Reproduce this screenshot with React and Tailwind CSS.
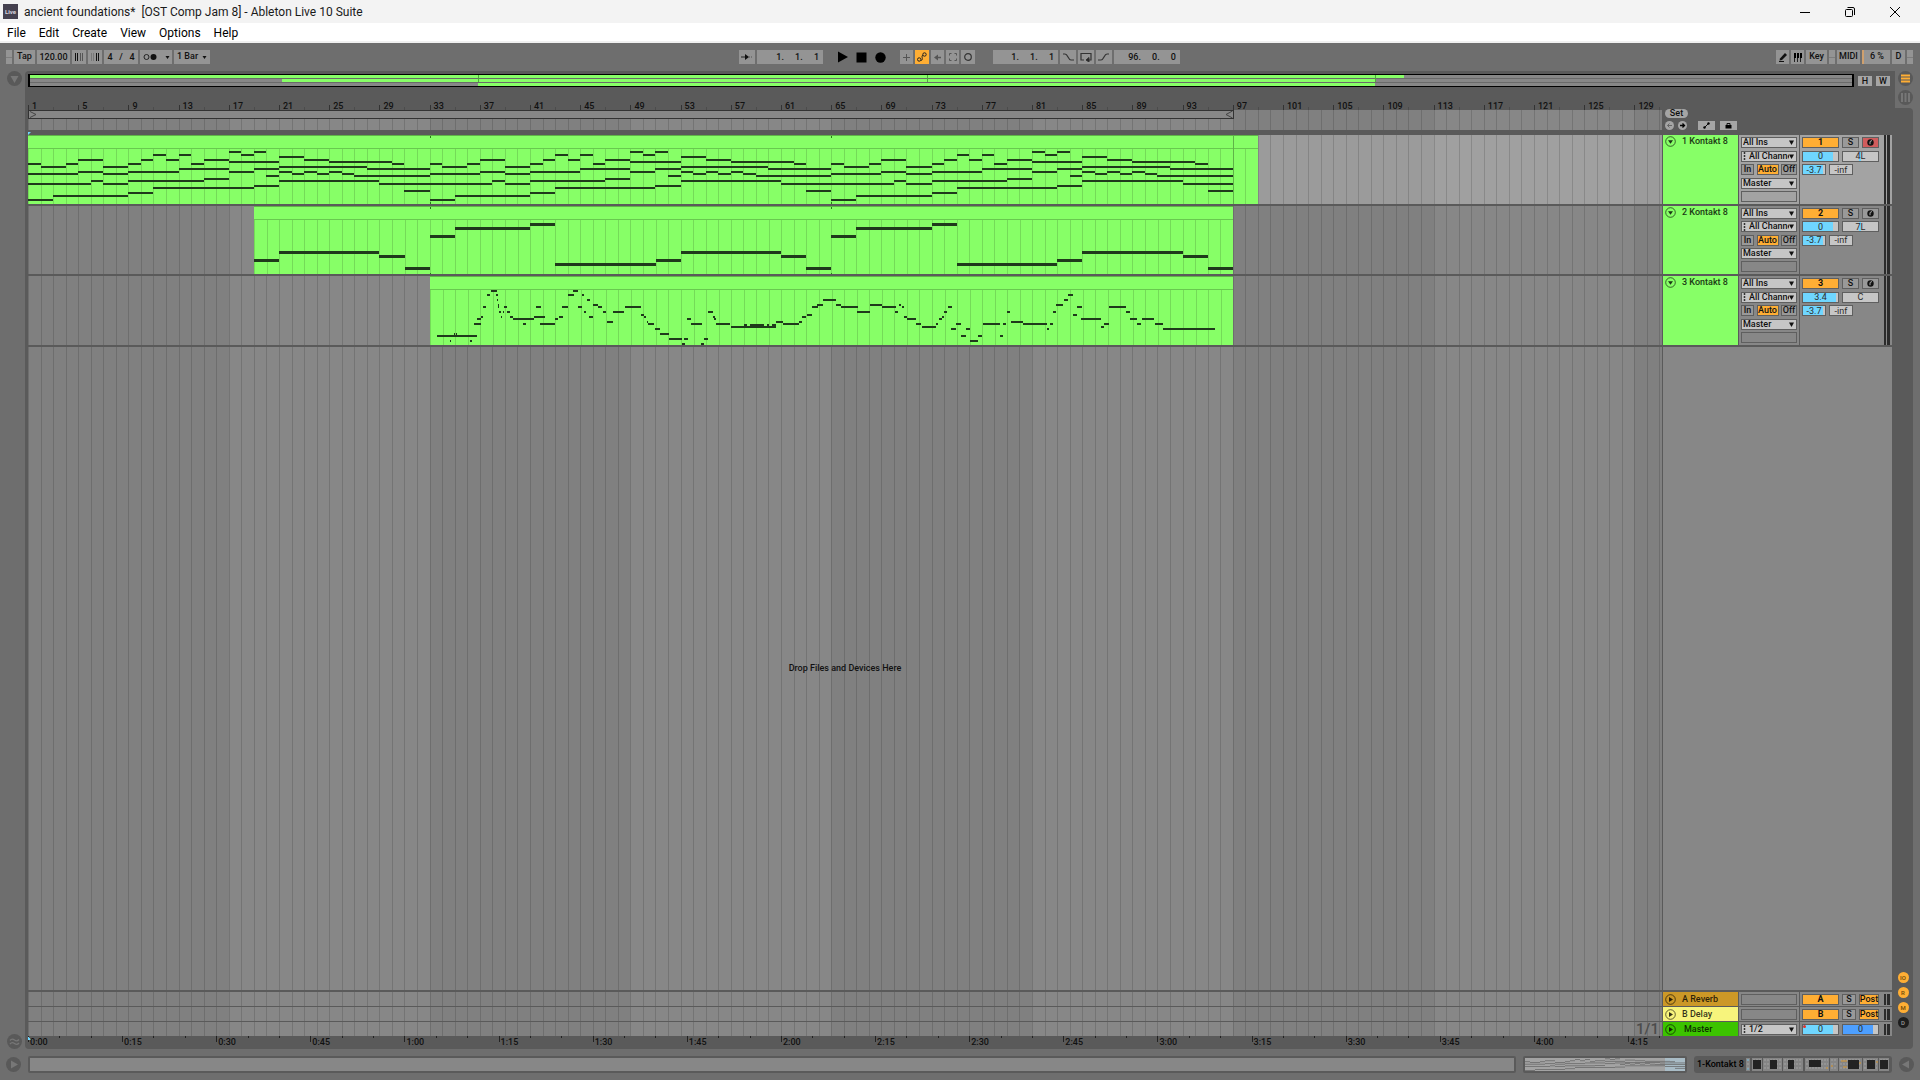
import React, { useState } from 'react';
import clsx from 'clsx';

const TOTAL_BARS = 130.2;
const pct = (bars, total = TOTAL_BARS) => `${(bars / total) * 100}%`;
const range = (n) => Array.from({ length: n }, (_, i) => i);

// [row y, start bar, end bar, ...more start/end pairs]
const CHORD_ROWS = [
    [16, 16, 17, 18, 19],
    [19, 10, 11, 12, 13, 17, 18],
    [21, 20, 22],
    [24, 4, 6, 9, 10, 11, 12, 14, 16, 22, 24],
    [26, 16, 20, 24, 29],
    [28, 0, 1, 3, 4, 8, 9, 13, 14, 29, 30],
    [31, 1, 3, 6, 8, 20, 27],
    [33, 12, 16, 18, 20, 27, 32],
    [36, 4, 6, 8, 12, 16, 18, 20, 21, 22, 23, 24, 25],
    [38, 0, 4, 6, 8, 21, 22, 23, 24, 25, 26],
    [40, 19, 20, 26, 32],
    [43, 14, 16],
    [45, 5, 6, 8, 14, 20, 28],
    [48, 0, 5, 6, 8, 28, 32],
    [50, 18, 20],
    [52, 10, 18],
    [55, 30, 32],
    [57, 8, 10],
    [60, 2, 8],
    [64, 0, 2],
];

const BASS_ROWS = [
    [17, 8, 10],
    [21, 2, 8],
    [29, 0, 2],
    [45, 20, 28],
    [49, 28, 30],
    [53, 18, 20],
    [57, 10, 18],
    [61, 30, 32],
];

// Melody is free-timed: 2409 steps over 64 bars, [start, end, pitch line]
const MELODY_STEPS = 2409;
const MELODY = [
    [22, 140, 648], [60, 63, 663], [120, 125, 663], [72, 75, 642], [78, 81, 642], [132, 152, 612],
    [142, 152, 598], [152, 158, 591], [160, 169, 562], [170, 181, 526], [183, 201, 512], [199, 203, 526],
    [201, 204, 541], [203, 206, 555], [204, 207, 562], [208, 212, 576], [213, 217, 591], [218, 222, 576],
    [222, 231, 562], [230, 239, 576], [240, 249, 591], [250, 312, 598], [280, 288, 612], [312, 344, 591],
    [319, 332, 562], [329, 375, 612], [375, 384, 598], [387, 399, 591], [397, 414, 562], [415, 431, 526],
    [430, 445, 512], [444, 455, 562], [456, 461, 526], [462, 468, 576], [470, 479, 541], [478, 489, 591],
    [490, 503, 555], [504, 517, 562], [518, 528, 576], [531, 548, 605], [550, 582, 576], [586, 634, 562],
    [634, 643, 584], [643, 648, 591], [651, 654, 605], [655, 671, 612], [674, 689, 627], [689, 716, 642],
    [718, 755, 656], [756, 765, 671], [763, 774, 656], [814, 822, 671], [823, 834, 656], [772, 783, 598],
    [782, 815, 612], [835, 848, 576], [849, 854, 591], [852, 858, 598], [859, 900, 612], [903, 1038, 620],
    [941, 951, 615], [960, 1002, 615], [1010, 1018, 615], [1025, 1038, 615], [1039, 1059, 605], [1060, 1107, 612],
    [1107, 1115, 605], [1116, 1128, 591], [1130, 1146, 584], [1147, 1163, 562], [1161, 1179, 555], [1178, 1218, 541],
    [1217, 1232, 555], [1234, 1283, 562], [1281, 1320, 576], [1320, 1356, 555], [1356, 1398, 562], [1396, 1405, 576],
    [1406, 1413, 555], [1416, 1422, 562], [1423, 1431, 591], [1431, 1458, 598], [1459, 1474, 612], [1476, 1518, 620],
    [1517, 1525, 612], [1527, 1535, 598], [1536, 1542, 591], [1543, 1551, 576], [1554, 1566, 562], [1564, 1578, 627],
    [1579, 1592, 612], [1593, 1607, 648], [1608, 1620, 627], [1621, 1643, 663], [1644, 1656, 648], [1658, 1710, 612],
    [1711, 1719, 648], [1718, 1728, 612], [1731, 1741, 576], [1743, 1779, 605], [1779, 1851, 612], [1851, 1858, 627],
    [1860, 1868, 612], [1870, 1878, 576], [1879, 1899, 555], [1901, 1914, 541], [1915, 1929, 526], [1930, 1940, 584],
    [1942, 1955, 562], [1954, 2013, 598], [2014, 2022, 620], [2022, 2036, 612], [2038, 2088, 562], [2089, 2100, 576],
    [2100, 2120, 598], [2121, 2133, 612], [2136, 2172, 598], [2173, 2199, 612], [2199, 2355, 627],
];

function loopNotes(rows, clipStart, h) {
    const notes = [];
    [0, 32, 64].forEach((base) => {
        rows.forEach(([y, ...spans]) => {
            for (let i = 0; i < spans.length; i += 2) {
                const x = base + spans[i] - clipStart;
                if (x >= 0) notes.push({ x, w: spans[i + 1] - spans[i], y, h });
            }
        });
    });
    return notes;
}

const melodyNotes = MELODY.map(([a, b, line]) => ({
    x: (a / MELODY_STEPS) * 64,
    w: ((b - a) / MELODY_STEPS) * 64,
    y: Math.round(line / 3 - 157),
    h: 2,
}));

const TRACKS = [
    { id: 1, name: '1 Kontakt 8', start: 0, end: 98, loops: [32, 64], boundary: 96, notes: loopNotes(CHORD_ROWS, 0, 2), height: 'h-[69px]', vol: '0', volFill: 'w-[85%]', pan: '4L', panMark: true, armed: true, selected: true },
    { id: 2, name: '2 Kontakt 8', start: 18, end: 96, loops: [14, 46], notes: loopNotes(BASS_ROWS, 18, 3), height: 'h-[68px]', vol: '0', volFill: 'w-[85%]', pan: '7L', panMark: true },
    { id: 3, name: '3 Kontakt 8', start: 32, end: 96, loops: [], notes: melodyNotes, height: 'h-[69px]', vol: '3.4', volFill: 'w-[94%]', pan: 'C' },
];

const MENUS = ['File', 'Edit', 'Create', 'View', 'Options', 'Help'];

/* ---------- Title bar + menu ---------- */

function TitleBar() {
    return (
        <header className="flex h-[23px] items-center justify-between bg-[#f3f3f3] pl-[3px] text-[12px] text-[#1a1a1a]">
            <div className="flex items-center gap-[6px]">
                <span className="flex h-[15px] w-[15px] items-center justify-center bg-[#45414f] text-[6px] font-bold text-[#d5d2dc]">Live</span>
                <h1 className="whitespace-pre">ancient foundations*  [OST Comp Jam 8] - Ableton Live 10 Suite</h1>
            </div>
            <div className="flex pr-[3px]">
                <WindowButton label="Minimize"><path d="M1 6.5H11" /></WindowButton>
                <WindowButton label="Restore">
                    <rect x="1.5" y="3.5" width="7" height="7" rx="1" />
                    <path d="M3.5 1.5H9a1.5 1.5 0 0 1 1.5 1.5V9" />
                </WindowButton>
                <WindowButton label="Close"><path d="M1 1L11 11M11 1L1 11" /></WindowButton>
            </div>
        </header>
    );
}

function WindowButton({ label, children }) {
    return (
        <button aria-label={label} className="flex h-[22px] w-[45px] items-center justify-center">
            <svg viewBox="0 0 12 12" className="h-3 w-3 fill-none stroke-black">{children}</svg>
        </button>
    );
}

function MenuBar() {
    return (
        <nav className="flex h-5 items-start gap-[13px] border-b-2 border-[#f0f0f0] bg-white pl-[7px] text-[12px] leading-[20px] text-black">
            {MENUS.map((m) => <button key={m}>{m}</button>)}
        </nav>
    );
}

/* ---------- Control bar ---------- */

function Ctl({ className, label, children }) {
    return (
        <button aria-label={label} className={clsx('flex h-[14px] items-center justify-center', className)}>
            {children}
        </button>
    );
}

const grey = 'bg-[#949494]';

function Grip() {
    return (
        <span className="flex h-[14px] w-[6px] items-center bg-[#949494]">
            <span className="h-px w-full bg-[#7d7d7d]" />
        </span>
    );
}

function Position({ label, value, className }) {
    return (
        <input
            aria-label={label}
            defaultValue={value}
            className={clsx('h-[14px] bg-[#949494] pr-1 text-right whitespace-pre', className)}
        />
    );
}

function ControlBar() {
    const [playing, setPlaying] = useState(false);
    return (
        <section className="grid h-7 grid-cols-[1fr_auto_1fr] items-center pr-[7px] pl-[6px]">
            <div className="flex gap-[2px]">
                <Grip />
                <Ctl className={`${grey} w-[21px]`}>Tap</Ctl>
                <input aria-label="Tempo" defaultValue="120.00" className="h-[14px] w-[33px] bg-[#949494] text-center" />
                <Ctl className={`${grey} w-[14px]`} label="Nudge down">
                    <svg viewBox="0 0 10 8" className="h-2 w-[10px]" shapeRendering="crispEdges"><path d="M1.5 0V8M3.5 0V8" stroke="#111" /><path d="M6.5 0V8M8.5 0V8" stroke="#555" /></svg>
                </Ctl>
                <Ctl className={`${grey} w-[14px]`} label="Nudge up">
                    <svg viewBox="0 0 10 8" className="h-2 w-[10px]" shapeRendering="crispEdges"><path d="M1.5 0V8M3.5 0V8" stroke="#777" /><path d="M6.5 0V8M8.5 0V8" stroke="#111" /></svg>
                </Ctl>
                <input aria-label="Time signature" defaultValue="4   /   4" className="h-[14px] w-[34px] bg-[#949494] text-center" />
                <Ctl className={`${grey} w-8 gap-2`} label="Metronome">
                    <svg viewBox="0 0 14 8" className="h-2 w-[14px]"><circle cx="3.5" cy="4" r="2.5" fill="none" stroke="#222" /><circle cx="10.5" cy="4" r="3" fill="#111" /></svg>
                    <Caret />
                </Ctl>
                <span className="relative flex h-[14px] w-9 items-center bg-[#949494]">
                    <select aria-label="Quantization" className="h-full w-full appearance-none pl-[3px]"><option>1 Bar</option></select>
                    <span className="pointer-events-none absolute right-[3px]"><Caret /></span>
                </span>
            </div>

            <div className="flex items-center gap-[2px]">
                <Ctl className={`${grey} w-4`} label="Follow">
                    <svg viewBox="0 0 12 8" className="h-2 w-3"><path d="M0 4H4" stroke="#222" /><path d="M4 1L8 4L4 7Z" fill="#111" /><path d="M8 4H12" stroke="#555" strokeDasharray="1 1" /></svg>
                </Ctl>
                <Position label="Arrangement position" value="1.     1.     1" className="w-[66px]" />
                <div className="flex items-center gap-2 px-3">
                    <button aria-label="Play" onClick={() => setPlaying(true)} aria-pressed={playing}>
                        <svg viewBox="0 0 11 12" className="h-3 w-[11px]"><path d="M1 0.5L11 6L1 11.5Z" /></svg>
                    </button>
                    <button aria-label="Stop" onClick={() => setPlaying(false)}>
                        <svg viewBox="0 0 11 11" className="h-[11px] w-[11px]"><path d="M0.5 0.5H10.5V10.5H0.5Z" /></svg>
                    </button>
                    <button aria-label="Record">
                        <svg viewBox="0 0 11 11" className="h-[11px] w-[11px]"><circle cx="5.5" cy="5.5" r="5.2" /></svg>
                    </button>
                </div>
                <Ctl className={`${grey} w-[13px]`} label="Overdub">
                    <svg viewBox="0 0 9 9" className="h-[9px] w-[9px] stroke-[#555]"><path d="M4.5 1V8M1 4.5H8" /></svg>
                </Ctl>
                <Ctl className="w-[14px] bg-[#ffae34]" label="Automation arm">
                    <svg viewBox="0 0 10 10" className="h-[10px] w-[10px] fill-none stroke-[#222]"><circle cx="2.2" cy="7.5" r="1.7" /><circle cx="7.5" cy="2.5" r="1.7" /><path d="M4 8.5C7 8 3.5 3 6 3.5" /></svg>
                </Ctl>
                <Ctl className={`${grey} w-[13px]`} label="Re-enable automation">
                    <svg viewBox="0 0 9 9" className="h-[9px] w-[9px]"><path d="M1 4.5L5 1.5V7.5Z" fill="#555" /><path d="M4 4.5H8" stroke="#555" strokeWidth="1.5" /></svg>
                </Ctl>
                <Ctl className={`${grey} w-[13px]`} label="Capture MIDI">
                    <svg viewBox="0 0 10 10" className="h-[10px] w-[10px] fill-none stroke-[#555]"><path d="M1.5 3.5V1.5H3.5M6.5 1.5H8.5V3.5M8.5 6.5V8.5H6.5M3.5 8.5H1.5V6.5" /></svg>
                </Ctl>
                <Ctl className={`${grey} w-[14px]`} label="Session record">
                    <svg viewBox="0 0 10 10" className="h-[10px] w-[10px] fill-none stroke-[#333]"><circle cx="5" cy="5" r="3.3" strokeWidth="1.2" /></svg>
                </Ctl>
                <div className="w-[14px]" />
                <Position label="Loop start" value="1.     1.     1" className="w-[65px]" />
                <Ctl className={`${grey} w-4`} label="Punch in">
                    <svg viewBox="0 0 12 10" className="h-[10px] w-3 fill-none stroke-[#333]"><path d="M1 2H3C6 2 6 8 9 8H12" strokeWidth="1.2" /></svg>
                </Ctl>
                <Ctl className={`${grey} w-4`} label="Loop">
                    <svg viewBox="0 0 12 10" className="h-[10px] w-3 fill-none stroke-[#333]"><path d="M4 8H1V1.5H11V8H8" strokeWidth="1.2" /><path d="M9 5.5L6 8L9 10Z" fill="#222" /></svg>
                </Ctl>
                <Ctl className={`${grey} w-4`} label="Punch out">
                    <svg viewBox="0 0 12 10" className="h-[10px] w-3 fill-none stroke-[#333]"><path d="M0 8H3C6 8 6 2 9 2H11" strokeWidth="1.2" /></svg>
                </Ctl>
                <Position label="Loop length" value="96.     0.     0" className="w-[66px]" />
            </div>

            <div className="flex justify-end gap-[2px]">
                <Ctl className={`${grey} w-[13px]`} label="Draw mode">
                    <svg viewBox="0 0 10 10" className="h-[10px] w-[10px]"><path d="M2 6.5L7 1L9 3L4 8L1.5 8.5Z" fill="#111" /><path d="M1 9.5H6" stroke="#111" /></svg>
                </Ctl>
                <Ctl className={`${grey} w-[13px]`} label="Computer MIDI keyboard">
                    <svg viewBox="0 0 9 9" className="h-[9px] w-[9px]" shapeRendering="crispEdges"><path d="M1 0H3V5H1ZM4 0H6V5H4ZM7 0H9V5H7Z" fill="#000" /><path d="M1.5 5V9M4.5 5V9M7.5 5V9" stroke="#222" /></svg>
                </Ctl>
                <Ctl className={`${grey} w-[21px]`}>Key</Ctl>
                <Grip />
                <Ctl className={`${grey} w-[23px]`}>MIDI</Ctl>
                <span className="flex h-[14px] w-[28px] items-center justify-center border-l-2 border-[#cfa06e] bg-[#949494]">6 %</span>
                <Ctl className={`${grey} w-[13px]`}>D</Ctl>
                <Grip />
            </div>
        </section>
    );
}

function Caret() {
    return <svg viewBox="0 0 5 3" className="h-[3px] w-[5px]"><path d="M0.5 0H4.5L2.5 3Z" fill="#111" /></svg>;
}

/* ---------- Arrangement ---------- */

// Bar lines with a slightly lighter shade on every other group of 16 bars
function BarGrid() {
    return (
        <svg className="absolute inset-0 h-full w-full" shapeRendering="crispEdges">
            {[16, 48, 80, 112].map((b) => <rect key={b} x={pct(b)} width={pct(16)} height="100%" fill="#fff" fillOpacity="0.055" />)}
            {range(131).map((b) => <rect key={b} x={pct(b)} width="1" height="100%" fill="#000" fillOpacity="0.14" />)}
        </svg>
    );
}

function Overview() {
    const bars = 130;
    return (
        <div className="flex h-[13px] items-center gap-1 pr-[2px]">
            <div className="h-[13px] flex-1 border-x-2 border-y border-black bg-[#878787]">
                <svg className="block h-[11px] w-full" shapeRendering="crispEdges">
                    <rect y="3" width="100%" height="1" fill="#6a6a6a" />
                    <rect y="7" width="100%" height="1" fill="#6a6a6a" />
                    <rect width={pct(98, bars)} height="3" fill="#87ff67" />
                    <rect x={pct(18, bars)} y="4" width={pct(78, bars)} height="3" fill="#87ff67" />
                    <rect x={pct(32, bars)} y="8" width={pct(64, bars)} height="3" fill="#87ff67" />
                    {[32, 64, 96].map((b) => <rect key={b} x={pct(b, bars)} width="1" height="7" fill="#4fa83c" />)}
                </svg>
            </div>
            <button className="h-[10px] w-[14px] bg-[#a5a5a5] leading-[10px]">H</button>
            <button className="h-[10px] w-[14px] bg-[#a5a5a5] leading-[10px]">W</button>
        </div>
    );
}

function Ruler() {
    return (
        <div className="min-w-0 flex-1">
            <div className="relative h-[23px] overflow-hidden">
                <svg className="absolute inset-0 h-full w-full" shapeRendering="crispEdges">
                    {range(66).map((i) => (
                        <rect key={i} x={pct(i * 2)} y={i % 2 ? 20 : 18} width="1" height={i % 2 ? 3 : 5} fill={i % 2 ? '#4c4c4c' : '#333'} />
                    ))}
                </svg>
                {range(33).map((i) => (
                    <span key={i} className="absolute bottom-0 pl-1 leading-[8px]" style={{ left: pct(i * 4) }}>{i * 4 + 1}</span>
                ))}
            </div>
            <div className="relative h-5 bg-[#808080]">
                <BarGrid />
                <div className="absolute top-0 left-0 flex h-[9px] items-center justify-between border border-[#333] bg-[#878787]" style={{ width: pct(96.1) }}>
                    <svg viewBox="0 0 8 7" className="h-[7px] w-2"><path d="M1 0.5L7 3.5L1 6.5" fill="none" stroke="#444" /></svg>
                    <svg viewBox="0 0 8 7" className="h-[7px] w-2"><path d="M7.5 0L1 3.5L7.5 7" fill="none" stroke="#444" /></svg>
                </div>
            </div>
            <div className="relative h-[5px]">
                <svg viewBox="0 0 3 3" className="absolute bottom-0 left-0 h-[3px] w-[3px]"><path d="M0 0H3L0 3Z" fill="#6fd6ff" /></svg>
            </div>
        </div>
    );
}

function Clip({ track }) {
    const length = track.end - track.start;
    return (
        <div
            className="absolute top-0 h-full border-t border-[#5fb348] bg-[#87ff67]"
            style={{ left: pct(track.start), width: pct(length) }}
        >
            <svg className="absolute inset-0 h-full w-full" shapeRendering="crispEdges">
                <rect y="12" width="100%" height="1" fill="#68c94f" />
                {range(length).map((b) => <rect key={b} x={pct(b, length)} y="13" width="1" height="100%" fill="#000" fillOpacity="0.14" />)}
                {track.boundary && <rect x={pct(track.boundary, length)} width="1" height="100%" fill="#5fb348" />}
                {track.loops.map((b) => (
                    <g key={b} fill="#2a7a1a">
                        <rect x={pct(b, length)} width="1" height="2" />
                        <rect x={pct(b, length)} y="66" width="1" height="2" />
                    </g>
                ))}
                {track.notes.map((n, i) => (
                    <rect key={i} x={pct(n.x, length)} y={n.y - 1} width={pct(n.w, length)} height={n.h} fill="#1f3a1b" />
                ))}
            </svg>
        </div>
    );
}

function Lane({ selected, className, children }) {
    return (
        <div className={clsx('relative min-w-0 flex-1', selected ? 'bg-[#9b9b9b]' : 'bg-[#808080]', className)}>
            <BarGrid />
            {children}
        </div>
    );
}

/* ---------- Mixer ---------- */

const box = 'h-[11px] border border-[#5f5f5f] leading-[9px]';

function Dropdown({ label, value, lead }) {
    return (
        <div className={clsx(box, 'flex items-center bg-[#c6c6c6] pr-[2px] pl-px')}>
            {lead && <svg viewBox="0 0 4 8" className="mr-[2px] h-2 w-1 shrink-0"><path d="M1.5 0V8" stroke="#333" strokeWidth="1.5" strokeDasharray="2 1" /></svg>}
            <select aria-label={label} className="h-[9px] w-0 flex-1 appearance-none overflow-hidden text-clip whitespace-nowrap"><option>{value}</option></select>
            <svg viewBox="0 0 5 5" className="h-[5px] w-[5px] shrink-0"><path d="M0 0.5H5L2.5 5Z" fill="#111" /></svg>
        </div>
    );
}

function Value({ label, value, fill, mark, dot, className, fillClass = 'bg-[#6fd6ff]' }) {
    return (
        <div className={clsx(box, 'relative bg-[#c6c6c6]', className)}>
            {fill && <span className={clsx('absolute inset-y-0 left-0', fill, fillClass)} />}
            {mark && <span className="absolute inset-y-0 left-[16px] w-[2px] bg-[#6fd6ff]" />}
            {dot && <span className="absolute top-0 left-0 h-[3px] w-[3px] rounded-full bg-[#e0322b]" />}
            <input aria-label={label} defaultValue={value} className="absolute inset-0 h-full w-full text-center font-normal text-[#2b2b2b]" />
        </div>
    );
}

function Meter() {
    return (
        <div className="flex h-full gap-px">
            <span className="w-[2px] bg-[#2b2b2b]" />
            <span className="w-[3px] bg-[#2b2b2b]" />
        </div>
    );
}

function FoldIcon({ right }) {
    return (
        <svg viewBox="0 0 11 11" className="h-[11px] w-[11px] fill-none stroke-black/60">
            <circle cx="5.5" cy="5.5" r="4.8" />
            <path d={right ? 'M4 3L8 5.5L4 8Z' : 'M3 4.2H8L5.5 7.8Z'} className="fill-black/80 stroke-none" />
        </svg>
    );
}

function TrackHeader({ track }) {
    const bg = track.selected ? 'bg-[#a3a3a3]' : 'bg-[#878787]';
    const [monitor, setMonitor] = useState('Auto');
    return (
        <div className="ml-px flex w-[229px] shrink-0 gap-px">
            <div className="flex w-[75px] items-start gap-[6px] bg-[#87ff67] pt-px pl-[2px] text-[#1c3a14]">
                <button aria-label="Fold track"><FoldIcon /></button>
                <span className="leading-[11px]">{track.name}</span>
            </div>
            <div className={clsx('grid w-[60px] grid-rows-[repeat(5,11px)] content-between p-[2px]', bg)}>
                <Dropdown label="Input type" value="All Ins" />
                <Dropdown label="Input channel" value="All Channels" lead />
                <div className="flex justify-between">
                    {['In', 'Auto', 'Off'].map((m) => (
                        <button
                            key={m}
                            onClick={() => setMonitor(m)}
                            className={clsx(box, m === 'In' ? 'w-[13px]' : m === 'Auto' ? 'w-[22px]' : 'w-4', monitor === m ? 'bg-[#ffae34]' : 'bg-[#999]')}
                        >
                            <span className="flex justify-center">{m}</span>
                        </button>
                    ))}
                </div>
                <Dropdown label="Output" value="Master" />
                <div className={box} />
            </div>
            <div className={clsx('flex flex-1 justify-between pr-[2px] pl-[2px]', bg)}>
                <div className="grid w-[78px] grid-rows-[repeat(5,11px)] content-between py-[2px]">
                    <div className="flex gap-[3px]">
                        <button className={`${box} w-[37px] bg-[#ffae34] font-bold`}>{track.id}</button>
                        <button className={`${box} w-[17px] bg-[#999]`}>S</button>
                        <button aria-label="Arm" className={clsx(box, 'flex w-[17px] items-center justify-center', track.armed ? 'bg-[#d05c5c]' : 'bg-[#999]')}>
                            <svg viewBox="0 0 7 7" className="h-[7px] w-[7px]"><circle cx="3.5" cy="3.5" r="3.2" fill="#111" /><path d="M3 5.2V2.5M3 2.5L5 1.5" stroke="#aaa" /></svg>
                        </button>
                    </div>
                    <div className="flex gap-[3px]">
                        <Value label="Volume" value={track.vol} fill={track.volFill} className="w-[37px]" />
                        <Value label="Pan" value={track.pan} mark={track.panMark} className="w-[37px]" />
                    </div>
                    <div className="flex gap-[3px]">
                        <Value label="Send A" value="-3.7" fill="w-[92%]" className="w-6" />
                        <Value label="Send B" value="-inf" className="w-6" />
                    </div>
                </div>
                <Meter />
            </div>
        </div>
    );
}

function ReturnHeader({ name, letter, color }) {
    return (
        <div className="ml-px flex h-[14px] w-[229px] shrink-0 gap-px">
            <div className={clsx('flex w-[75px] items-center gap-[6px] pl-[2px] text-black/80', color)}>
                <button aria-label="Unfold track"><FoldIcon right /></button>
                <span className="leading-[11px]">{name}</span>
            </div>
            <div className="flex w-[60px] flex-col justify-center bg-[#878787] px-[2px]">
                <div className={box} />
            </div>
            <div className="flex flex-1 items-center gap-[3px] bg-[#878787] px-[2px]">
                <button className={`${box} w-[37px] bg-[#ffae34] font-bold`}>{letter}</button>
                <button className={`${box} w-[14px] bg-[#999]`}>S</button>
                <button className={`${box} w-5 bg-[#ffae34]`}><span className="flex justify-center">Post</span></button>
                <div className="ml-auto h-[11px]"><Meter /></div>
            </div>
        </div>
    );
}

function MasterHeader() {
    return (
        <div className="ml-px flex h-[14px] w-[229px] shrink-0 gap-px">
            <div className="flex w-[75px] items-center gap-2 bg-[#3cc300] pl-[2px] text-black/80">
                <button aria-label="Unfold master"><FoldIcon right /></button>
                <span className="leading-[11px]">Master</span>
            </div>
            <div className="flex w-[60px] flex-col justify-center bg-[#878787] px-[2px]">
                <Dropdown label="Master output" value="1/2" lead />
            </div>
            <div className="flex flex-1 items-center gap-[3px] bg-[#878787] px-[2px]">
                <Value label="Master volume" value="0" fill="w-[85%]" dot className="w-[37px]" />
                <Value label="Cue volume" value="0" fill="w-[85%]" fillClass="bg-[#4d9fff]" className="w-[37px]" />
                <div className="ml-auto h-[11px]"><Meter /></div>
            </div>
        </div>
    );
}

function LocatorTools() {
    return (
        <div className="ml-px flex w-[229px] shrink-0 flex-col items-start justify-end gap-[3px] pb-[5px] pl-[2px]">
            <button className="h-[9px] w-[23px] rounded-full bg-[#a5a5a5] leading-[9px]">Set</button>
            <div className="flex items-center">
                <button aria-label="Previous locator" className="mr-1">
                    <svg viewBox="0 0 9 9" className="h-[9px] w-[9px]"><circle cx="4.5" cy="4.5" r="4.5" fill="#a5a5a5" /><path d="M7 4.5H2.5M4.5 2.5L2.5 4.5L4.5 6.5" fill="none" stroke="#666" /></svg>
                </button>
                <button aria-label="Next locator" className="mr-[11px]">
                    <svg viewBox="0 0 9 9" className="h-[9px] w-[9px]"><circle cx="4.5" cy="4.5" r="4.5" fill="#a5a5a5" /><path d="M2 4.5H6.5M4.5 2.5L6.5 4.5L4.5 6.5" fill="none" stroke="#000" strokeWidth="1.3" /></svg>
                </button>
                <button aria-label="Automation mode" className="mr-[5px] flex h-[9px] w-[17px] items-center justify-center bg-[#a5a5a5]">
                    <svg viewBox="0 0 7 7" className="h-[7px] w-[7px]"><path d="M1.5 5.5L5.5 1.5" stroke="#111" /><circle cx="1.5" cy="5.5" r="1.2" /><circle cx="5.5" cy="1.5" r="1.2" /></svg>
                </button>
                <button aria-label="Lock envelopes" className="flex h-[9px] w-[17px] items-center justify-center bg-[#a5a5a5]">
                    <svg viewBox="0 0 7 7" className="h-[7px] w-[7px]"><path d="M0.5 3H6.5V6.5H0.5Z" /><path d="M2 3V1.5H5V3" fill="none" stroke="#111" /></svg>
                </button>
            </div>
        </div>
    );
}

function TimeRuler() {
    return (
        <div className="flex h-[13px]">
            <div className="relative min-w-0 flex-1">
                <svg className="absolute inset-0 h-full w-full" shapeRendering="crispEdges">
                    {range(53).map((i) => <rect key={i} x={pct(i * 2.5)} width="1" height={i % 3 ? 2 : 6} fill="#222" />)}
                    <path d="M0 1L3 4H0Z" fill="#6fd6ff" />
                </svg>
                {range(18).map((i) => (
                    <span key={i} className="absolute top-0 pl-[2px] leading-[13px]" style={{ left: pct(i * 7.5) }}>
                        {Math.floor(i / 4)}:{String((i % 4) * 15).padStart(2, '0')}
                    </span>
                ))}
            </div>
            <div className="w-[230px]" />
        </div>
    );
}

function Arrangement() {
    return (
        <main className="flex min-w-0 flex-1 flex-col rounded-tl rounded-bl bg-[#5a5a5a] px-[3px] pt-[3px]">
            <Overview />
            <div className="flex">
                <Ruler />
                <LocatorTools />
            </div>
            <div className="flex flex-1 flex-col gap-[2px]">
                {TRACKS.map((t) => (
                    <div key={t.id} className={clsx('flex', t.height)}>
                        <Lane selected={t.selected}><Clip track={t} /></Lane>
                        <TrackHeader track={t} />
                    </div>
                ))}
                <div className="flex flex-1">
                    <Lane className="flex items-center justify-center">
                        <p className="relative">Drop Files and Devices Here</p>
                    </Lane>
                    <div className="ml-px w-[229px] bg-[#878787]" />
                </div>
                <div className="flex flex-col gap-px">
                    <div className="flex"><Lane /><ReturnHeader name="A Reverb" letter="A" color="bg-[#cc9827]" /></div>
                    <div className="flex"><Lane /><ReturnHeader name="B Delay" letter="B" color="bg-[#f7f47c]" /></div>
                    <div className="flex">
                        <Lane><span className="absolute right-[3px] bottom-0 text-[15px] leading-[14px] text-[#4c4c4c]">1/1</span></Lane>
                        <MasterHeader />
                    </div>
                </div>
            </div>
            <TimeRuler />
        </main>
    );
}

/* ---------- Side rails + footer ---------- */

function RoundButton({ label, children }) {
    return (
        <button aria-label={label}>
            <svg viewBox="0 0 15 15" className="h-[15px] w-[15px]"><circle cx="7.5" cy="7.5" r="7.5" fill="#595959" />{children}</svg>
        </button>
    );
}

function RightRail() {
    const toggles = [['IO', true], ['R', true], ['M', true], ['D', false]];
    return (
        <aside className="flex w-[25px] flex-col">
            <div className="flex h-[37px] flex-col items-start gap-1 pl-[3px]">
                <RoundButton label="Arrangement view"><path d="M3 4.5H12M3 7.5H12M3 10.5H12" stroke="#ffae34" strokeWidth="2" /></RoundButton>
                <RoundButton label="Session view"><path d="M4 3V12M7.5 3V12M11 3V12" stroke="#777" strokeWidth="2" /></RoundButton>
            </div>
            <div className="mr-[7px] flex flex-1 flex-col items-center justify-end gap-1 rounded-tr rounded-br bg-[#5a5a5a] pr-[2px] pb-[21px]">
                {toggles.map(([l, on]) => (
                    <button key={l} className={clsx('h-[11px] w-[11px] rounded-full text-[6px] leading-[11px]', on ? 'bg-[#ffae34] text-[#6b4708]' : 'bg-[#1d1d1d] text-[#999]')}>{l}</button>
                ))}
            </div>
        </aside>
    );
}

function DeviceChain() {
    const devices = [[0, 4, 0, 0], [6, 10, 7, 8], [17, 19, 24, 7], [37, 20, 42, 6], [59, 24, 63, 12], [84, 8, 0, 0], [93, 23, 102, 11], [117, 15, 121, 8], [133, 10, 134, 8]];
    return (
        <svg viewBox="0 0 143 13" className="h-[13px] w-[143px] shrink-0">
            {devices.map(([x, w, sx, sw]) => (
                <g key={x}>
                    <rect x={x} width={w} height="13" fill="#858585" />
                    <path d={`M${x + 1} 2H${x + w - 1}M${x + 1} 6H${x + w - 1}M${x + 1} 10H${x + w - 1}`} stroke="#a2a2a2" strokeDasharray="2 1" />
                    {sw > 0 && <rect x={sx} y={2} width={sw} height={x === 59 ? 7 : 9} fill="#222" />}
                </g>
            ))}
            <path d="M2 1V3M2 10V12" stroke="#6fb6d6" />
            <path d="M95 3H101M114 4V6M131 3V5M81 9V11M86 7V9M97 9H101" stroke="#d8962c" />
        </svg>
    );
}

function Footer() {
    return (
        <footer className="flex h-[31px] items-center gap-[7px] px-[6px]">
            <RoundButton label="Show clip view"><path d="M5 3.5L12 7.5L5 11.5Z" fill="#777" /></RoundButton>
            <div className="h-[17px] flex-1 rounded-[2px] border-2 border-[#5a5a5a] bg-[#878787]" />
            <div className="h-[17px] w-[164px] rounded-[2px] border-2 border-[#5a5a5a] bg-[#a3a3a3]">
                <svg viewBox="0 0 32 70" preserveAspectRatio="none" className="block h-[13px] w-full">
                    <rect x="28" y="0" width="4" height="70" fill="#a9bcc6" />
                    {CHORD_ROWS.map(([y, ...s]) => range(s.length / 2).map((i) => (
                        <rect key={`${y}-${i}`} x={s[i * 2]} y={(y - 14) * 1.3} width={s[i * 2 + 1] - s[i * 2]} height="4" fill="#666" />
                    )))}
                </svg>
            </div>
            <div className="flex h-[17px] w-[198px] items-center justify-between rounded-[3px] bg-[#5a5a5a] px-[3px]">
                <span className="whitespace-nowrap text-black">1-Kontakt 8</span>
                <DeviceChain />
            </div>
            <RoundButton label="Show device view"><path d="M10 3.5L3 7.5L10 11.5Z" fill="#777" /></RoundButton>
        </footer>
    );
}

export default function App() {
    return (
        <div className="flex h-screen flex-col overflow-hidden bg-[#6e6e6e] font-['Roboto',sans-serif] text-[#111]">
            <TitleBar />
            <MenuBar />
            <div className="flex min-h-0 flex-1 flex-col text-[9px] font-medium">
                <ControlBar />
                <div className="flex min-h-0 flex-1">
                    <aside className="flex w-[25px] flex-col items-end justify-between pr-[3px]">
                        <RoundButton label="Show browser"><path d="M3.5 5H11.5L7.5 12Z" fill="#777" /></RoundButton>
                        <RoundButton label="Groove pool"><path d="M3 6.5Q5 4 7.5 6T12 5.5M3 10Q5 7.5 7.5 9.5T12 9" fill="none" stroke="#777" strokeWidth="1.3" /></RoundButton>
                    </aside>
                    <Arrangement />
                    <RightRail />
                </div>
                <Footer />
            </div>
        </div>
    );
}
